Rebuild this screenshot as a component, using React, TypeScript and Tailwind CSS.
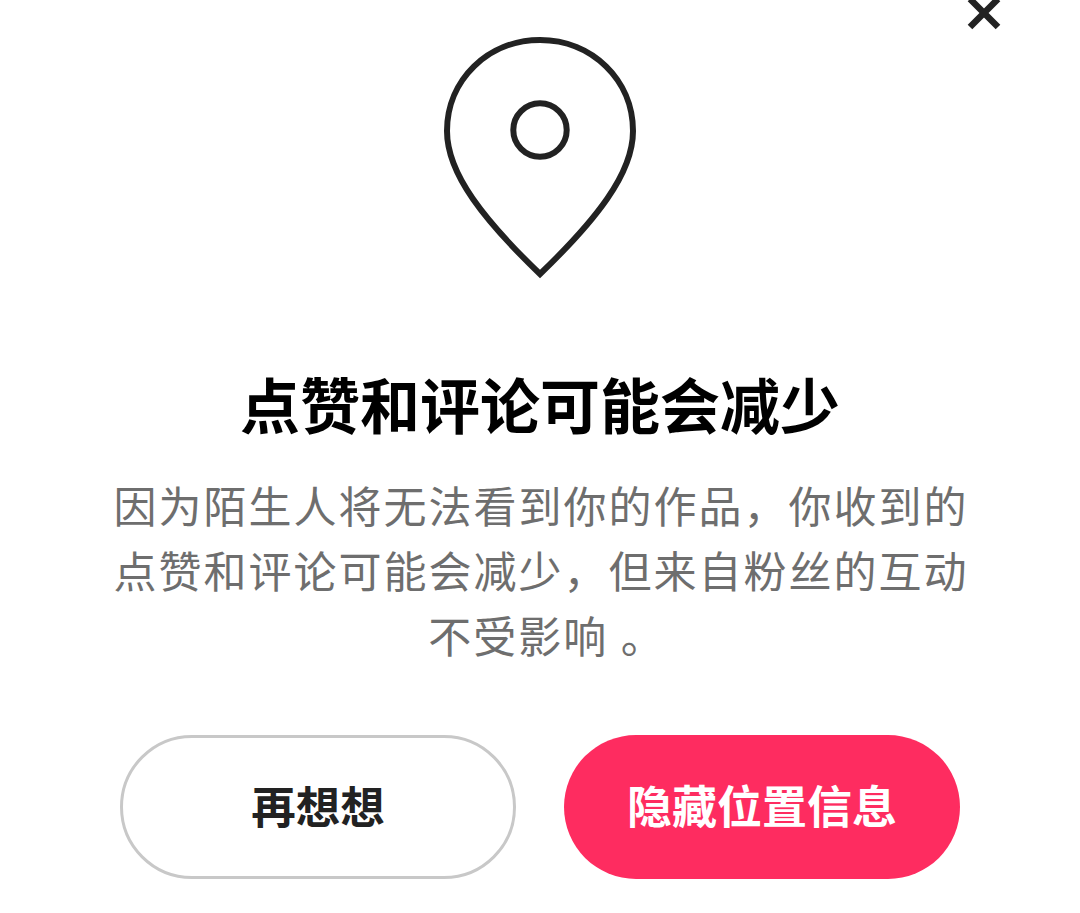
import React from 'react';

const cjk = "font-['Roboto','Noto_Sans_CJK_SC',sans-serif]";

const PinIcon = () => (
  <svg width="196" height="244" viewBox="0 0 196 244" fill="none" stroke="#222222" strokeWidth="6">
    <path d="M98 5C46 5 5 45 5 96C5 118 15 141 31 164C47 187 72 214 98 239C124 214 149 187 165 164C181 141 191 118 191 96C191 45 150 5 98 5Z" />
    <circle cx="98" cy="95" r="26.7" />
  </svg>
);

const App: React.FC = () => {
  return (
    <div className={`relative w-[1080px] h-[913px] overflow-hidden bg-white ${cjk}`}>
      {/* close button is cut off by the top edge */}
      <svg className="absolute left-[964px] top-[-7px]" width="40" height="40" viewBox="0 0 40 40" fill="none">
        <path d="M6 6L34 34M34 6L6 34" stroke="#222222" strokeWidth="6.5" />
      </svg>

      <div className="flex flex-col items-center pt-[35px]">
        <PinIcon />
        <h1 className="mt-[92px] text-[60px] leading-[76px] font-bold text-black">点赞和评论可能会减少</h1>
        <p className="mt-[29px] w-[860px] pl-[2px] text-center text-[43px] leading-[65px] tracking-[2px] text-[#6e6e6e]">
          因为陌生人将无法看到你的作品，你收到的
          <br />
          点赞和评论可能会减少，但来自粉丝的互动
          <br />
          <span className="pl-[12px]">不受影响 。</span>
        </p>
        <div className="mt-[64px] flex gap-[48px]">
          <button className="flex h-[144px] w-[396px] items-center justify-center rounded-[72px] border-[3px] border-[#c8c8c8] bg-white pt-[4px] text-[44.5px] font-bold text-[#222222]">
            再想想
          </button>
          <button className="flex h-[144px] w-[396px] items-center justify-center rounded-[72px] bg-[#fe2c60] pt-[4px] text-[45px] font-bold text-white">
            隐藏位置信息
          </button>
        </div>
      </div>
    </div>
  );
};

export default App;
